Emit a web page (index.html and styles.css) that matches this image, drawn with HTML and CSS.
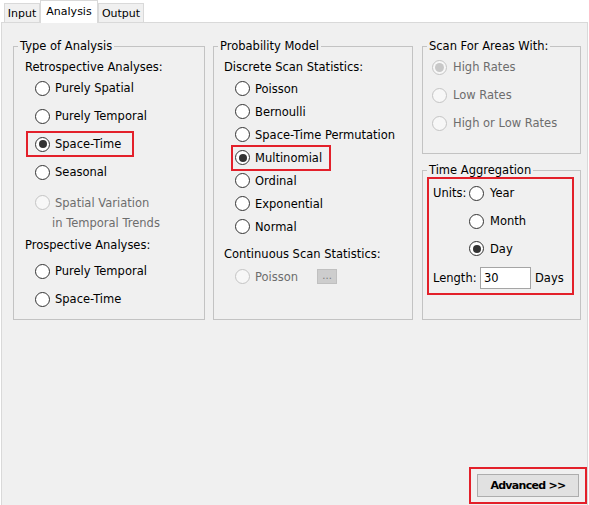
FILE: index.html
```html
<!DOCTYPE html>
<html>
<head>
<meta charset="utf-8">
<link rel="stylesheet" href="styles.css">
</head>
<body>
<div class="tabs">
  <div class="tab w-input">Input</div>
  <div class="tab active w-analysis">Analysis</div>
  <div class="tab w-output">Output</div>
</div>
<div class="panel">
  <div class="columns">
    <fieldset class="group g1">
      <legend>Type of Analysis</legend>
      <div class="body b1">
        <div class="hd hd-a">Retrospective Analyses:</div>
        <div class="opt o28 ind1"><span class="radio"></span>Purely Spatial</div>
        <div class="opt o28 ind1"><span class="radio"></span>Purely Temporal</div>
        <div class="opt o28 ind1"><span class="hl hl1"><span class="radio on"></span>Space-Time</span></div>
        <div class="opt o28 ind1"><span class="radio"></span>Seasonal</div>
        <div class="opt sv ind1 dim"><span class="radio dis"></span><span class="svtext"><span class="l1">Spatial Variation</span><span class="l2">in Temporal Trends</span></span></div>
        <div class="hd hd-b">Prospective Analyses:</div>
        <div class="opt o28 ind1"><span class="radio"></span>Purely Temporal</div>
        <div class="opt o28 ind1"><span class="radio"></span>Space-Time</div>
      </div>
    </fieldset>
    <fieldset class="group g2">
      <legend>Probability Model</legend>
      <div class="body b2">
        <div class="hd">Discrete Scan Statistics:</div>
        <div class="opt o23 ind2"><span class="radio"></span>Poisson</div>
        <div class="opt o23 ind2"><span class="radio"></span>Bernoulli</div>
        <div class="opt o23 ind2"><span class="radio"></span>Space-Time Permutation</div>
        <div class="opt o23 ind2"><span class="hl hl2"><span class="radio on"></span>Multinomial</span></div>
        <div class="opt o23 ind2"><span class="radio"></span>Ordinal</div>
        <div class="opt o23 ind2"><span class="radio"></span>Exponential</div>
        <div class="opt o23 ind2"><span class="radio"></span>Normal</div>
        <div class="hd hd-c">Continuous Scan Statistics:</div>
        <div class="opt o23 ind2 dim pois"><span class="radio dis"></span>Poisson<span class="dots">...</span></div>
      </div>
    </fieldset>
    <div class="col3">
      <fieldset class="group g3">
        <legend>Scan For Areas With:</legend>
        <div class="body b3">
          <div class="opt o28 dim"><span class="radio dis on wide"></span>High Rates</div>
          <div class="opt o28 dim"><span class="radio dis wide"></span>Low Rates</div>
          <div class="opt o28 dim"><span class="radio dis wide"></span>High or Low Rates</div>
        </div>
      </fieldset>
      <fieldset class="group g4">
        <legend>Time Aggregation</legend>
        <div class="ta">
          <div class="units">
            <div class="units-label">Units:</div>
            <div class="units-opts">
              <div class="opt o28"><span class="radio wide"></span>Year</div>
              <div class="opt o28"><span class="radio wide"></span>Month</div>
              <div class="opt o27"><span class="radio on wide"></span>Day</div>
            </div>
          </div>
          <div class="len">
            <span class="len-label">Length:</span>
            <span class="input">30</span>
            <span class="days">Days</span>
          </div>
        </div>
      </fieldset>
    </div>
  </div>
  <div class="foot">
    <div class="adv-wrap"><button class="adv">Advanced &gt;&gt;</button></div>
  </div>
</div>
</body>
</html>
```
FILE: styles.css
```css
* { box-sizing: border-box; }
body {
  margin: 0;
  background: #fff;
  font: 11.5px "DejaVu Sans", sans-serif;
  color: #000;
  overflow: hidden;
}
.tabs {
  display: flex;
  align-items: flex-end;
  height: 22px;
  padding-left: 4px;
  position: relative;
  z-index: 1;
}
.tab {
  height: 19px;
  border: 1px solid #d9d9d9;
  border-bottom: none;
  background: #f0f0f0;
  text-align: center;
  line-height: 19px;
  white-space: nowrap;
  font-size: 11px;
}
.tab.active {
  height: 23px;
  margin-bottom: -1px;
  background: #fff;
  line-height: 21px;
}
.w-input { width: 36px; }
.w-analysis { width: 58px; }
.w-output { width: 46px; }

.panel {
  margin: 0 1px;
  border: 1px solid #d9d9d9;
  background: #f0f0f0;
  height: 500px;
  padding: 16px 0 0 11px;
}
.columns {
  display: flex;
  align-items: flex-start;
}
.group {
  margin: 0;
  padding: 0;
  border: 1px solid #c3c3c3;
  min-width: 0;
}
legend {
  margin-left: 4px;
  padding: 0 2px;
  line-height: 14px;
}
.g1 { width: 192px; height: 281px; }
.g2 { width: 200px; height: 281px; margin-left: 8px; }
.col3 {
  margin-left: 9px;
  width: 159px;
  display: flex;
  flex-direction: column;
  gap: 9px;
}
.g3 { height: 115px; }
.g4 { height: 157px; }

.body { display: flex; flex-direction: column; }
.b1 { padding: 4px 0 0 11px; }
.b2 { padding: 4px 0 0 10px; }
.b3 { padding: 0 0 0 9px; }

.hd { line-height: 20px; white-space: nowrap; }
.hd-a { margin-bottom: -3px; }
.hd-b { margin-top: 2px; margin-bottom: 2px; }
.hd-c { margin-top: 6px; margin-bottom: 1px; }

.opt {
  display: flex;
  align-items: center;
  white-space: nowrap;
}
.o28 { height: 28px; }
.o27 { height: 27px; }
.o23 { height: 23px; }
.ind1 { margin-left: 10px; }
.ind2 { margin-left: 11px; }
.dim { color: #6d6d6d; }

.radio {
  flex: none;
  width: 15px;
  height: 15px;
  border: 1px solid #333;
  border-radius: 50%;
  background: #fff;
  margin-right: 5px;
  display: flex;
  align-items: center;
  justify-content: center;
}
.radio.wide { margin-right: 6px; }
.radio.on::after {
  content: "";
  width: 8px;
  height: 8px;
  border-radius: 50%;
  background: #333;
}
.radio.dis {
  border-color: #c4c4c4;
  background: #f7f7f7;
}
.radio.dis.on::after {
  width: 9px;
  height: 9px;
  background: #c8c8c8;
}

.sv {
  align-items: flex-start;
  margin-top: 7px;
  line-height: 20px;
}
.sv .radio { margin-top: 2px; }
.svtext { display: flex; flex-direction: column; }
.svtext .l2 { margin-left: -3px; }

.hl {
  display: flex;
  align-items: center;
  height: 26px;
  border: 2px solid #e3202a;
}
.hl1 { margin-left: -9px; padding: 0 11px 0 7px; }
.hl2 { margin-left: -4px; padding: 0 7px 0 2px; }

.dots {
  margin-left: 19px;
  width: 20px;
  height: 15px;
  background: #cdcdcd;
  border: 1px solid #c0c0c0;
  color: #7a7a7a;
  font-size: 10px;
  line-height: 12px;
  text-align: center;
}

.ta {
  border: 2px solid #e3202a;
  margin-left: 4px;
  width: 147px;
  padding-left: 4px;
}
.units { display: flex; }
.units-label { width: 36px; line-height: 28px; }
.len {
  display: flex;
  align-items: center;
  height: 31px;
}
.len-label { width: 47px; }
.input {
  width: 51px;
  height: 22px;
  border: 1px solid #a5a5a5;
  background: #fff;
  padding-left: 3px;
  line-height: 20px;
}
.days { margin-left: 4px; }

.foot {
  display: flex;
  justify-content: flex-end;
  margin-top: 147px;
}
.adv-wrap {
  border: 2px solid #e3202a;
  padding: 5px 6px;
}
.adv {
  display: block;
  width: 102px;
  height: 23px;
  border: 1px solid #adadad;
  background: #e1e1e1;
  font: bold 11px "DejaVu Sans", sans-serif;
  letter-spacing: -0.7px;
  color: #000;
  padding: 0;
}
```
